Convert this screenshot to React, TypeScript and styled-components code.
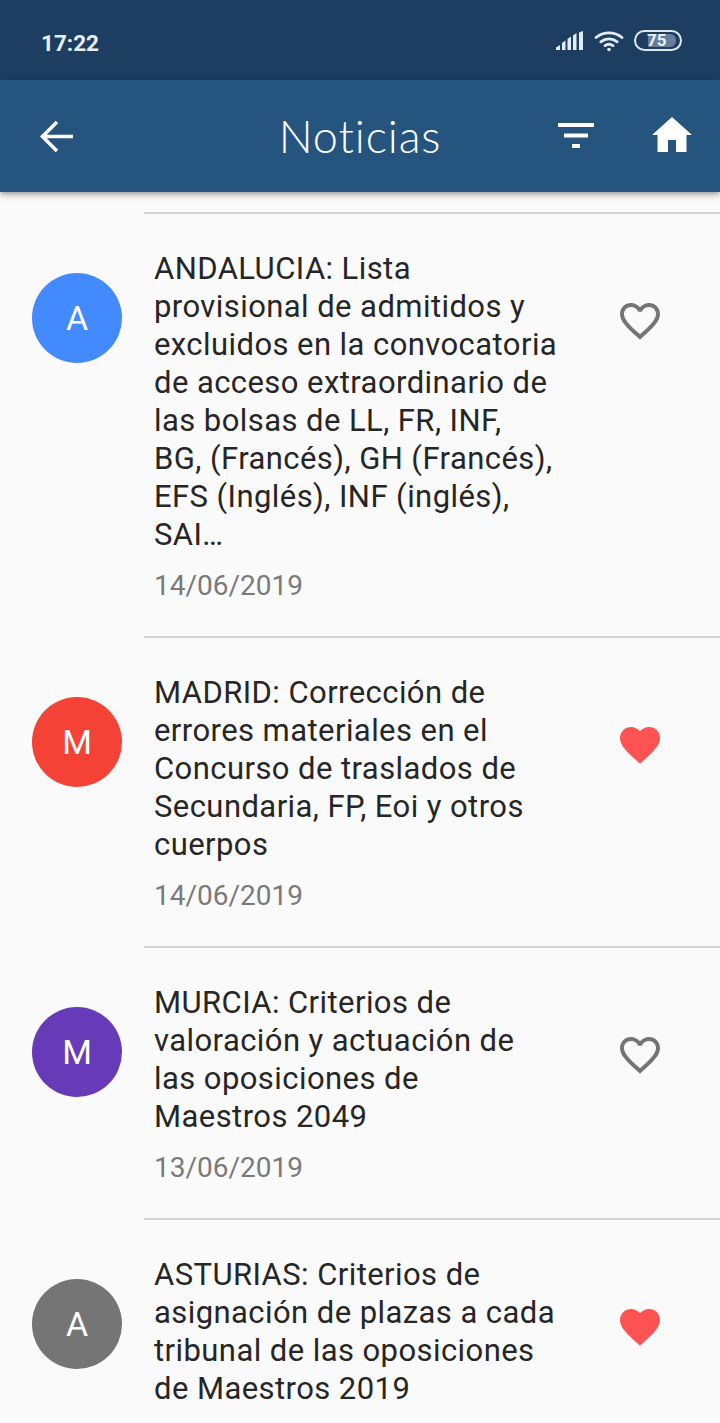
import React from "react";
import styled, { createGlobalStyle } from "styled-components";

const Global = createGlobalStyle`
  html, body { margin: 0; padding: 0; background: #fafafa; }
  body { width: 720px; height: 1423px; overflow: hidden; font-family: Roboto, "Liberation Sans", sans-serif; }
`;

const Screen = styled.div`
  width: 720px;
  height: 1423px;
  overflow: hidden;
  display: flex;
  flex-direction: column;
  background: #fafafa;
`;

const StatusBar = styled.div`
  height: 80px;
  flex: none;
  background: #1d3e61;
  display: flex;
  align-items: center;
  justify-content: space-between;
  padding: 4px 38px 0 41px;
  box-sizing: border-box;
  color: #e8eff7;
`;

const Clock = styled.span`
  font: 700 22.5px/26px Roboto, sans-serif;
  padding-top: 1px;
`;

const StatusIcons = styled.div`
  display: flex;
  align-items: center;
  gap: 10px;
  margin-top: -3px;
`;

const Battery = styled.div`
  position: relative;
  width: 48px;
  height: 21px;
  box-sizing: border-box;
  border: 2px solid #dfe8f2;
  border-radius: 11px;
  display: flex;
  align-items: center;
  padding-left: 11px;
  font: 700 17px/17px Roboto, sans-serif;
  color: #e8eff7;
`;

const BatteryFill = styled.span`
  position: absolute;
  left: 12px;
  top: 2px;
  bottom: 2px;
  width: 28px;
  border-radius: 0 6px 6px 0;
  background: #667e9a;
`;

const BatteryLabel = styled.span`
  position: relative;
`;

const AppBar = styled.header`
  height: 112px;
  flex: none;
  position: relative;
  z-index: 1;
  background: #25547f;
  box-shadow: 0 4px 5px rgba(0, 0, 0, 0.14), 0 1px 10px rgba(0, 0, 0, 0.12), 0 2px 4px -1px rgba(0, 0, 0, 0.2);
  display: flex;
  align-items: center;
  color: #fff;
`;

const BackSlot = styled.div`
  width: 112px;
  height: 112px;
  display: flex;
  align-items: center;
  padding-left: 40px;
  box-sizing: border-box;
`;

const Title = styled.h1`
  flex: 1;
  margin: 0;
  text-align: center;
  font: 300 45px/52px Lato, sans-serif;
  letter-spacing: 0.9px;
  color: #fff;
`;

const Actions = styled.div`
  width: 112px;
  display: flex;
  justify-content: flex-end;
  align-items: center;
  padding-right: 28px;
  box-sizing: border-box;
`;

const ActionIcons = styled.div`
  display: flex;
  align-items: center;
  gap: 58px;
  flex: none;
`;

const HomeIcon = styled.svg`
  margin-bottom: 3px;
`;

const List = styled.main`
  margin-top: 20px;
  display: flex;
  flex-direction: column;
`;

const Item = styled.article<{ $h: number }>`
  position: relative;
  display: flex;
  align-items: flex-start;
  padding: 61px 0 0 32px;
  box-sizing: border-box;
  height: ${(p) => p.$h}px;
  flex: none;
  &::before {
    content: "";
    position: absolute;
    left: 144px;
    right: 0;
    top: 0;
    height: 2px;
    background: #d3d3d3;
  }
`;

const Avatar = styled.div<{ $c: string }>`
  width: 90px;
  height: 90px;
  flex: none;
  border-radius: 50%;
  background: ${(p) => p.$c};
  color: #fff;
  display: flex;
  align-items: center;
  justify-content: center;
  font: 400 34px/40px Roboto, sans-serif;
`;

const Body = styled.div`
  width: 424px;
  flex: none;
  margin: -23px 0 0 32px;
`;

const Headline = styled.p`
  margin: 0;
  font: 400 31px/38px Roboto, sans-serif;
  color: #262626;
  letter-spacing: 0.43px;
  white-space: pre-line;
`;

const DateText = styled.div`
  margin-top: 15px;
  font: 400 28px/34px Roboto, sans-serif;
  color: #7a7a7a;
`;

const HeartSlot = styled.div`
  margin: 24px 0 0 38px;
  width: 48px;
  height: 48px;
  flex: none;
`;

const heart =
  "M12 21.35l-1.45-1.32C5.4 15.36 2 12.28 2 8.5 2 5.42 4.42 3 7.5 3c1.74 0 3.41.81 4.5 2.09C13.09 3.81 14.76 3 16.5 3 19.58 3 22 5.42 22 8.5c0 3.78-3.4 6.86-8.55 11.54L12 21.35z";
const heartOutline =
  "M16.5 3c-1.74 0-3.41.81-4.5 2.09C10.91 3.81 9.24 3 7.5 3 4.42 3 2 5.42 2 8.5c0 3.78 3.4 6.86 8.55 11.54L12 21.35l1.45-1.32C18.6 15.36 22 12.28 22 8.5 22 5.42 19.58 3 16.5 3zm-4.4 15.55l-.1.1-.1-.1C7.14 14.24 4 11.39 4 8.5 4 6.5 5.5 5 7.5 5c1.54 0 3.04.99 3.57 2.36h1.87C13.46 5.99 14.96 5 16.5 5c2 0 3.5 1.5 3.5 3.5 0 2.89-3.14 5.74-7.9 10.05z";

const items = [
  {
    h: 424, l: "A", c: "#448aff", fav: false, d: "14/06/2019",
    t: "ANDALUCIA: Lista\nprovisional de admitidos y\nexcluidos en la convocatoria\nde acceso extraordinario de\nlas bolsas de LL, FR, INF,\nBG, (Francés), GH (Francés),\nEFS (Inglés), INF (inglés),\nSAI…",
  },
  {
    h: 310, l: "M", c: "#f44336", fav: true, d: "14/06/2019",
    t: "MADRID: Corrección de\nerrores materiales en el\nConcurso de traslados de\nSecundaria, FP, Eoi y otros\ncuerpos",
  },
  {
    h: 272, l: "M", c: "#673ab7", fav: false, d: "13/06/2019",
    t: "MURCIA: Criterios de\nvaloración y actuación de\nlas oposiciones de\nMaestros 2049",
  },
  {
    h: 272, l: "A", c: "#757575", fav: true, d: "",
    t: "ASTURIAS: Criterios de\nasignación de plazas a cada\ntribunal de las oposiciones\nde Maestros 2019",
  },
];

export default function App() {
  return (
    <Screen>
      <Global />
      <StatusBar>
        <Clock>17:22</Clock>
        <StatusIcons>
          <svg width="28" height="20" viewBox="0 0 28 20" fill="#e3ebf4">
            <path d="M0 19v-2.500l4-2.500v5zM6 19v-7l3.500-2.500V19zM11.500 19V8l3.500-2.500V19zM17 19V4.500L20.500 2v17zM23 19V1.500L27 0v19z" />
          </svg>
          <svg width="30" height="22" viewBox="0 0 30 22" fill="none" stroke="#e3ebf4" strokeWidth="2.800" strokeLinecap="round">
            <path d="M2 7.500C9.500 1.200 20.500 1.200 28 7.500" />
            <path d="M6.800 11.800c4.800-3.800 11.600-3.800 16.400 0" />
            <path d="M11 15.600c2.500-1.700 5.500-1.700 8 0" />
            <circle cx="15" cy="19.500" r="1.800" fill="#e3ebf4" stroke="none" />
          </svg>
          <Battery>
            <BatteryFill />
            <BatteryLabel>75</BatteryLabel>
          </Battery>
        </StatusIcons>
      </StatusBar>
      <AppBar>
        <BackSlot>
          <svg width="33" height="33" viewBox="0 0 34 34" fill="none" stroke="#fff" strokeWidth="3.600">
            <path d="M34 17H3M17.500 2 2.500 17l15 15" />
          </svg>
        </BackSlot>
        <Title>Noticias</Title>
        <Actions>
          <ActionIcons>
            <svg width="36" height="26" viewBox="0 0 36 26" fill="#fff">
              <path d="M0 0h36v4H0zM6 10.500h24v4H6zM14 21h8v4h-8z" />
            </svg>
            <HomeIcon width="40" height="35" viewBox="0 0 40 35" fill="#fff">
              <path d="M20 0 40 18h-5.500v17H24V23h-8v12H5.500V18H0z" />
            </HomeIcon>
          </ActionIcons>
        </Actions>
      </AppBar>
      <List>
        {items.map((it, i) => (
          <Item key={i} $h={it.h}>
            <Avatar $c={it.c}>{it.l}</Avatar>
            <Body>
              <Headline>{it.t}</Headline>
              {it.d && <DateText>{it.d}</DateText>}
            </Body>
            <HeartSlot>
              <svg width="48" height="48" viewBox="0 0 24 24" fill={it.fav ? "#ff5252" : "#757575"}>
                <path d={it.fav ? heart : heartOutline} />
              </svg>
            </HeartSlot>
          </Item>
        ))}
      </List>
    </Screen>
  );
}
